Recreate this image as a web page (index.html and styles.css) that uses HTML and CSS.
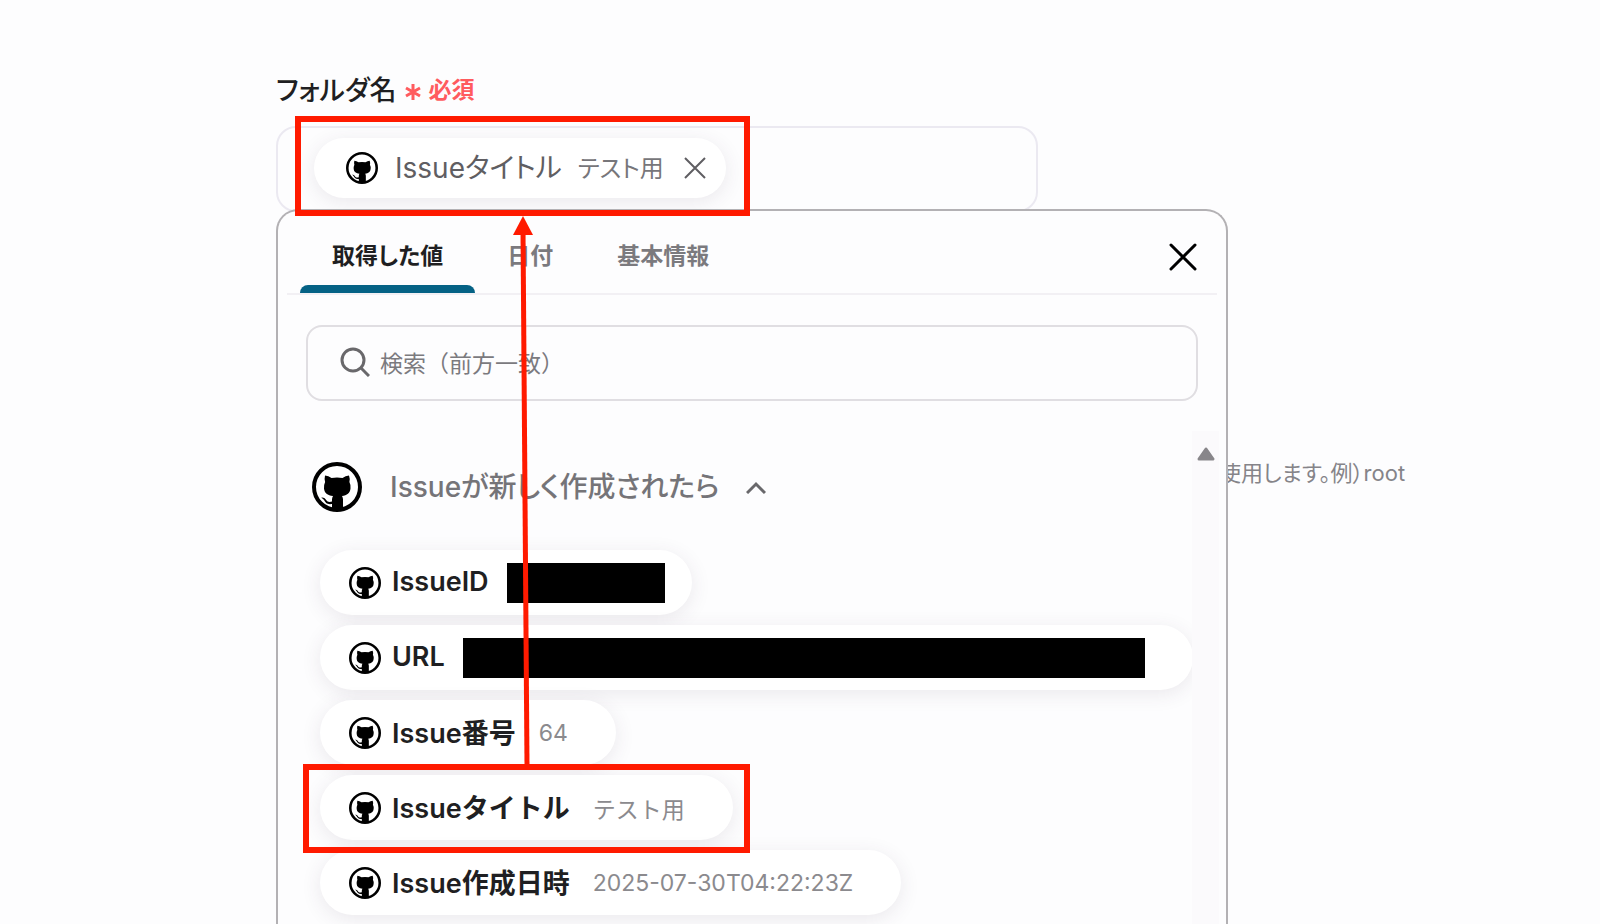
FILE: index.html
```
<!DOCTYPE html>
<html lang="ja">
<head>
    <meta charset="UTF-8">
    <meta name="viewport" content="width=device-width, initial-scale=1.0">
    <title>フォルダ名</title>
    <link rel="stylesheet" href="styles.css">
</head>
<body>
    <!-- Shared icon -->
    <svg class="sprite" aria-hidden="true">
        <symbol id="github" viewBox="0 0 50 50">
            <circle cx="25" cy="25" r="23" fill="#fff" stroke="#000" stroke-width="4"/>
            <path d="M13 13.500q3.500.3 6.500 2.500q5.500-1 11 0q3-2.200 6.500-2.500q1.300 3.500.4 6.500q1.600 3 1.100 6.500c-.4 4.500-3.500 7-8.500 7.500q1 1.500 1 3.500V48H20v-6c-5 .8-6.500-1.500-8-4q-1-1.500-2.800-2.300q3-.6 4.800 2c1.500 2.200 3 2.600 6 1.800V37.500q0-2 1-3.500c-5.500-.5-8.600-3-9-7.500q-.3-3.500 1.100-6.500q-.9-3-.1-6.500z"/>
        </symbol>
    </svg>

    <main>
        <div class="label-row">
            <label for="folder">フォルダ名</label>
            <svg class="asterisk" viewBox="0 0 18 18"><path d="M9 1v16M2 5l14 8M16 5L2 13"/></svg>
            <span class="required">必須</span>
        </div>

        <div class="field">
            <div class="token">
                <svg class="icon"><use href="#github"/></svg>
                <span class="token-name">Issueタイトル</span>
                <span class="token-value">テスト用</span>
                <button class="remove" aria-label="削除">
                    <svg viewBox="0 0 22 22"><path d="M1 1l20 20M21 1L1 21"/></svg>
                </button>
            </div>
            <input id="folder" class="field-input" type="text">
        </div>

        <div class="row">
            <!-- Value picker -->
            <div class="panel">
                <nav class="tabs">
                    <button class="tab active">取得した値</button>
                    <button class="tab">日付</button>
                    <button class="tab">基本情報</button>
                    <button class="close" aria-label="閉じる">
                        <svg viewBox="0 0 28 28"><path d="M2 2l24 24M26 2L2 26"/></svg>
                    </button>
                </nav>

                <div class="search">
                    <svg viewBox="0 0 30 30"><circle cx="13" cy="13" r="11"/><path d="M21 21l8 8"/></svg>
                    <input type="search" placeholder="検索（前方一致）" aria-label="検索">
                </div>

                <div class="scroll">
                    <div class="list">
                        <button class="group">
                            <svg class="group-icon"><use href="#github"/></svg>
                            <span>Issueが新しく作成されたら</span>
                            <svg class="chevron" viewBox="0 0 20 13"><path d="M1 12l9-9 9 9"/></svg>
                        </button>
                        <div class="chips">
                            <button class="chip short">
                                <svg class="icon"><use href="#github"/></svg>
                                <span class="name">IssueID</span>
                                <span class="mask"></span>
                            </button>
                            <button class="chip">
                                <svg class="icon"><use href="#github"/></svg>
                                <span class="name">URL</span>
                                <span class="mask mask-long"></span>
                            </button>
                            <button class="chip">
                                <svg class="icon"><use href="#github"/></svg>
                                <span class="name">Issue番号</span>
                                <span class="value">64</span>
                            </button>
                            <button class="chip">
                                <svg class="icon"><use href="#github"/></svg>
                                <span class="name">Issueタイトル</span>
                                <span class="value">テスト用</span>
                            </button>
                            <button class="chip">
                                <svg class="icon"><use href="#github"/></svg>
                                <span class="name">Issue作成日時</span>
                                <span class="value">2025-07-30T04:22:23Z</span>
                            </button>
                        </div>
                    </div>
                    <div class="scrollbar">
                        <svg viewBox="0 0 18 14"><path d="M9 2l7 10H2z"/></svg>
                    </div>
                </div>
            </div>
            <p class="hint">使用します。例）root</p>
        </div>
    </main>

    <!-- Highlight boxes and arrow drawn over the form -->
    <svg class="marks" width="1600" height="924" aria-hidden="true">
        <rect x="298" y="119" width="449" height="94"/>
        <rect x="306" y="767" width="441" height="83"/>
        <path class="line" d="M527 765L523 230"/>
        <path class="head" d="M523 216l10 19h-20z"/>
    </svg>
</body>
</html>
```

FILE: styles.css
```
* {
    box-sizing: border-box;
}

body {
    margin: 0;
    height: 100vh;
    overflow: hidden;
    position: relative;
    background-color: #fdfdfe;
    color: #1f1f22;
    font-family: Inter, "Noto Sans CJK JP", sans-serif;
}

button {
    padding: 0;
    border: none;
    background: none;
    color: inherit;
    font-family: inherit;
    cursor: pointer;
}

svg {
    display: block;
    flex-shrink: 0;
    fill: none;
}

.sprite {
    position: absolute;
    width: 0;
    height: 0;
}

main {
    height: 100%;
    padding: 68px 0 0 276px;
    display: flex;
    flex-direction: column;
}

.label-row {
    display: flex;
    align-items: center;
    height: 40px;
    gap: 7px;
    margin-bottom: 18px;
    font-weight: 500;
}

.label-row label {
    font-size: 27px;
    font-feature-settings: "palt";
}

.asterisk {
    width: 18px;
    height: 18px;
    margin-top: 8px;
    stroke: #ff5b5e;
    stroke-width: 3;
}

.required {
    color: #ff5b5e;
    font-size: 23px;
    font-weight: 600;
}

/* Folder name field */
.field {
    display: flex;
    width: 100%;
    max-width: 762px;
    height: 86px;
    padding: 10px 36px;
    border: 2px solid #ebe9f1;
    border-radius: 20px;
    flex-shrink: 0;
}

.token {
    display: flex;
    align-items: center;
    height: 60px;
    padding: 0 20px 0 32px;
    border-radius: 30px;
    background-color: #fff;
    box-shadow: 0 4px 20px rgba(70, 50, 80, 0.1);
    color: #5f5e62;
    font-feature-settings: "palt";
    white-space: nowrap;
}

.icon {
    width: 32px;
    height: 32px;
    fill: #000;
}

.token-name {
    margin-left: 17px;
    padding-bottom: 4px;
    font-size: 28px;
}

.token-value {
    margin-left: 16px;
    padding-bottom: 4px;
    font-size: 24px;
    color: #77767a;
}

.remove {
    margin-left: 20px;
}

.remove svg {
    width: 22px;
    height: 22px;
    stroke: #5f5e62;
    stroke-width: 2;
}

.field-input {
    flex: 1;
    min-width: 0;
    border: none;
    outline: none;
    background: transparent;
    font-size: 26px;
}

.row {
    display: flex;
    flex: 1;
    min-height: 0;
    margin-top: -3px;
}

.panel {
    position: relative;
    z-index: 1;
    display: flex;
    flex-direction: column;
    width: 100%;
    max-width: 952px;
    border: 2px solid #b3b1b4;
    border-bottom: none;
    border-radius: 22px 22px 0 0;
    background-color: #fdfdfe;
}

.hint {
    margin: 0 0 0 -9px;
    padding-top: 246px;
    color: #858489;
    font-size: 22px;
    font-feature-settings: "palt";
    white-space: nowrap;
}

/* Tabs */
.tabs {
    display: flex;
    flex-shrink: 0;
    height: 84px;
    margin: 0 9px;
    padding-left: 13px;
    border-bottom: 2px solid #f2f0f4;
}

.tab {
    position: relative;
    padding: 4px 32px 0;
    color: #7b7a7e;
    font-size: 23px;
    font-weight: 600;
    font-feature-settings: "palt";
}

.tab.active {
    color: #1f1f22;
}

.tab.active::after {
    content: "";
    position: absolute;
    left: 0;
    right: 0;
    bottom: 0;
    height: 8px;
    border-radius: 8px 8px 0 0;
    background-color: #056285;
}

.close {
    margin-left: auto;
    padding: 10px 20px 0;
}

.close svg {
    width: 28px;
    height: 28px;
    stroke: #000;
    stroke-width: 3;
    stroke-linecap: round;
}

/* Search */
.search {
    display: flex;
    align-items: center;
    flex-shrink: 0;
    height: 76px;
    margin: 30px 28px;
    padding: 0 32px;
    gap: 10px;
    border: 2px solid #e0dee2;
    border-radius: 16px;
}

.search svg {
    width: 30px;
    height: 30px;
    margin-bottom: 2px;
    stroke: #69686b;
    stroke-width: 3;
}

.search input {
    flex: 1;
    padding: 2px 0 0;
    border: none;
    outline: none;
    background: transparent;
    font-family: inherit;
    font-size: 23px;
}

.search input::placeholder {
    color: #7b7a7e;
}

/* Value list */
.scroll {
    display: flex;
    flex: 1;
    min-height: 0;
    margin-right: 7px;
}

.list {
    flex: 1;
    min-width: 0;
    padding: 31px 0 0 34px;
    overflow: hidden;
}

.scrollbar {
    width: 27px;
    padding: 16px 0 0 5px;
    background-color: #fbfafc;
}

.scrollbar svg {
    width: 18px;
    height: 14px;
    fill: #88868a;
    stroke: #88868a;
    stroke-width: 3;
    stroke-linejoin: round;
}

.group {
    display: flex;
    align-items: center;
    height: 50px;
    color: #757478;
    font-size: 28px;
    font-weight: 500;
    font-feature-settings: "palt";
}

.group span {
    padding-bottom: 4px;
}

.group-icon {
    width: 50px;
    height: 50px;
    margin-right: 28px;
    fill: #000;
}

.chevron {
    width: 20px;
    height: 13px;
    margin-left: 27px;
    stroke: #69686b;
    stroke-width: 3;
}

.chips {
    display: flex;
    flex-direction: column;
    align-items: flex-start;
    gap: 10px;
    margin: 38px 0 0 8px;
}

.chip {
    display: flex;
    align-items: center;
    flex-shrink: 0;
    height: 65px;
    padding: 0 48px 0 29px;
    border-radius: 33px;
    background-color: #fff;
    box-shadow: 0 4px 20px rgba(70, 50, 80, 0.1);
    white-space: nowrap;
}

.chip.short {
    padding-right: 27px;
}

.name {
    margin-left: 11px;
    padding-bottom: 2px;
    font-size: 27px;
    font-weight: 600;
}

.value {
    margin-left: 23px;
    color: #8b8a8e;
    font-size: 23px;
}

.mask {
    width: 158px;
    height: 40px;
    margin-left: 18px;
    background-color: #000;
}

.mask-long {
    width: 682px;
}

/* Overlay */
.marks {
    position: absolute;
    top: 0;
    left: 0;
    z-index: 2;
    pointer-events: none;
    stroke: #ff1a00;
}

.marks rect {
    stroke-width: 6;
}

.marks .line {
    stroke-width: 5;
}

.marks .head {
    fill: #ff1a00;
    stroke: none;
}
```
